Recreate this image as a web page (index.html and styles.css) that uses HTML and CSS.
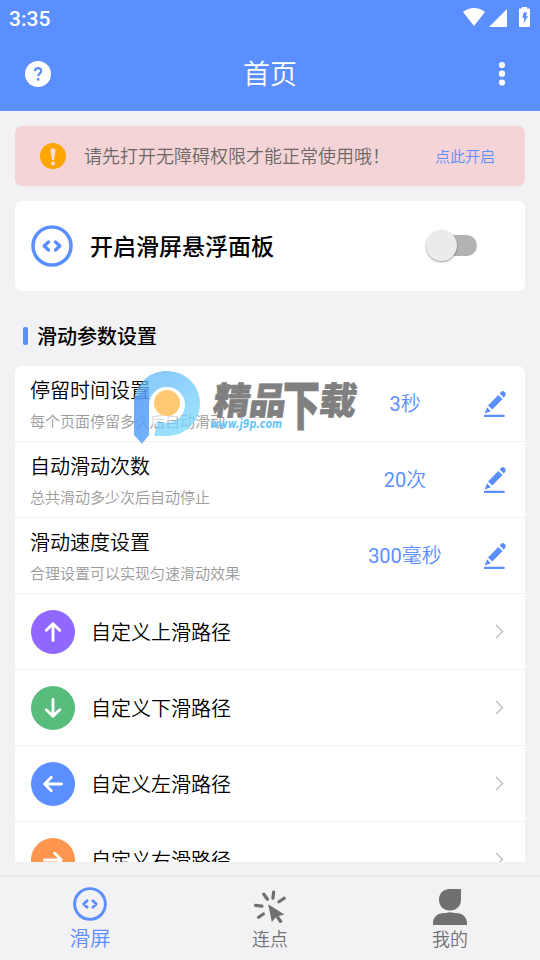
FILE: index.html
```html
<!DOCTYPE html>
<html lang="zh-CN">
<head>
<meta charset="utf-8">
<title>首页</title>
<link rel="stylesheet" href="styles.css">
</head>
<body>
<svg class="defs" width="0" height="0">
  <symbol id="slide" viewBox="0 0 42 42"><circle cx="21" cy="21" r="19" fill="none" stroke="currentColor" stroke-width="3.6"/><path d="M17.500 17L13.200 21l4.300 4M24.500 17l4.300 4-4.300 4" fill="none" stroke="currentColor" stroke-width="3.400" stroke-linecap="round" stroke-linejoin="round"/></symbol>
  <symbol id="pencil" viewBox="0 0 24 28"><path d="M6.200 17.500L16.400 7" fill="none" stroke="currentColor" stroke-width="6"/><path d="M15.600 3.400l1.600-1.700q1.800-1.400 3.600.3t.5 3.700l-1.600 1.700z M3 17.300l3.800 4-6.100 2.200z" fill="currentColor"/><path d="M.8 25.800h19" stroke="currentColor" stroke-width="2.200" stroke-linecap="round"/></symbol>
  <symbol id="arrow" viewBox="0 0 44 44"><path d="M22 30.500V13.800M15.300 20.300L22 13.700l6.700 6.600" fill="none" stroke="#fff" stroke-width="2.900" stroke-linecap="round" stroke-linejoin="round"/></symbol>
  <symbol id="chevron" viewBox="0 0 9 15"><path d="M1 1l6.500 6.500L1 14" fill="none" stroke="#c4c4c4" stroke-width="1.500"/></symbol>
</svg>
<div class="app">
  <header class="top">
    <div class="status">
      <span class="time">3:35</span>
      <svg class="signals" width="68" height="20" viewBox="0 0 68 20"><path d="M1 5C7.500-.3 16.500-.3 23 5L12 19z M27 20L45 2v18z" fill="#fff"/><path d="M57 1.500h3V0h5v1.500h2q1 0 1 1V19q0 1-1 1h-9q-1 0-1-1z" fill="#fff"/><path d="M61.500 5.500h3.800L63.900 9.300h2.200l-4.600 7.200.9-5.500h-2z" fill="#5b8fff"/></svg>
    </div>
    <div class="appbar">
      <svg class="help" width="26" height="26" viewBox="0 0 26 26"><circle cx="13" cy="13" r="13" fill="#fff"/><path d="M10 10.200C10 5.900 16.200 6.100 16.200 10c0 2.400-3 2.500-3 5.200" fill="none" stroke="#5b8fff" stroke-width="2.200"/><rect x="12" y="17" width="2.300" height="2.600" fill="#5b8fff"/></svg>
      <h1>首页</h1>
      <svg class="more" width="8" height="26" viewBox="0 0 8 26" fill="#fff"><circle cx="4" cy="4" r="3.100"/><circle cx="4" cy="12.700" r="3.100"/><circle cx="4" cy="21.500" r="3.100"/></svg>
    </div>
  </header>
  <main class="content">
    <section class="notice">
      <svg width="26" height="26" viewBox="0 0 26 26"><circle cx="13" cy="13" r="13" fill="#ffa500"/><path d="M13 5.300c1.700 0 2.700.9 2.500 2.600L14.100 17h-2.200L10.500 7.900C10.300 6.200 11.300 5.300 13 5.300z" fill="#f5dcda"/><circle cx="13" cy="20.500" r="1.900" fill="#f5dcda"/></svg>
      <p>请先打开无障碍权限才能正常使用哦！</p>
      <a>点此开启</a>
    </section>
    <section class="panel">
      <svg class="blue" width="42" height="42"><use href="#slide"/></svg>
      <h2>开启滑屏悬浮面板</h2>
      <span class="switch"><span class="knob"></span></span>
    </section>
    <h3 class="section-title">滑动参数设置</h3>
    <section class="list">
      <div class="row"><div class="label"><b>停留时间设置</b><small>每个页面停留多久后自动滑动</small></div><span class="value"><i>3</i>秒</span><svg class="edit" width="24" height="28"><use href="#pencil"/></svg></div>
      <div class="row"><div class="label"><b>自动滑动次数</b><small>总共滑动多少次后自动停止</small></div><span class="value"><i>20</i>次</span><svg class="edit" width="24" height="28"><use href="#pencil"/></svg></div>
      <div class="row"><div class="label"><b>滑动速度设置</b><small>合理设置可以实现匀速滑动效果</small></div><span class="value"><i>300</i>毫秒</span><svg class="edit" width="24" height="28"><use href="#pencil"/></svg></div>
      <div class="row path"><svg class="dir up" width="44" height="44"><use href="#arrow"/></svg><b>自定义上滑路径</b><svg class="chev" width="9" height="15"><use href="#chevron"/></svg></div>
      <div class="row path"><svg class="dir down" width="44" height="44"><use href="#arrow"/></svg><b>自定义下滑路径</b><svg class="chev" width="9" height="15"><use href="#chevron"/></svg></div>
      <div class="row path"><svg class="dir left" width="44" height="44"><use href="#arrow"/></svg><b>自定义左滑路径</b><svg class="chev" width="9" height="15"><use href="#chevron"/></svg></div>
      <div class="row path"><svg class="dir right" width="44" height="44"><use href="#arrow"/></svg><b>自定义右滑路径</b><svg class="chev" width="9" height="15"><use href="#chevron"/></svg></div>
    </section>
  </main>
  <nav class="tabs">
    <a class="tab active"><svg width="34" height="34"><use href="#slide"/></svg><span>滑屏</span></a>
    <a class="tab"><svg width="34" height="34" viewBox="0 0 34 34"><path d="M10.800 5.200l3.600 5M20.700 3l-.8 6.200M31.200 9.200l-5.200 3.600M2.600 16.300l6.300.9M5.600 28.300l4.800-3.300" stroke="#707070" stroke-width="3.200" stroke-linecap="round"/><path d="M15.200 15.200l16.200 10.200-5.800 1.500 4 5.300q-.8 2.200-3 1.700l-3.800-5.600-4 4.600z" fill="#707070"/></svg><span>连点</span></a>
    <a class="tab"><svg width="34" height="36" viewBox="0 0 34 36"><path d="M6 10.700C6 4 11 0 17 0h11v10.700C28 17 23.500 21.500 17 21.500S6 17 6 10.700z M0 36v-2c0-6 5-10 11-10 2.500 0 3.500-.8 6-.8s3.500.8 6 .8c6 0 11 4 11 10v2z" fill="#707070"/></svg><span>我的</span></a>
  </nav>
  <div class="watermark">
    <svg width="240" height="74" viewBox="0 0 240 74">
      <defs><linearGradient id="wm" x1="0" y1="0" x2=".6" y2="1"><stop offset="0" stop-color="#5fb4f8"/><stop offset=".5" stop-color="#6cc5fb"/><stop offset="1" stop-color="#7ddcff"/></linearGradient></defs>
      <path d="M15 54V32a18 18 0 1 1 11 16.500l-3 4.500z" fill="#fff" opacity=".65"/>
      <path fill-rule="evenodd" d="M0 28C5 9 17 0 33 0c18 0 33 14 33 32S52 65 33 65H20l4-15.500A18 18 0 1 0 15 33V64L8 72 0 64z" fill="url(#wm)" opacity=".75"/>
      <path d="M0 28l15-13v49l-7 9-8-9z" fill="#4a86f8" opacity=".5"/>
      <circle cx="33" cy="32" r="13" fill="#ffc973"/>
      <text class="brand" transform="translate(78 43) skewX(-8)">精品</text>
      <text class="brand" transform="translate(149 54) scale(1 1.45)">下</text>
      <text class="brand" transform="translate(184 43) skewX(-8)">载</text>
      <text class="url" x="76" y="57" textLength="72" lengthAdjust="spacingAndGlyphs">www.j9p.com</text>
    </svg>
  </div>
</div>
</body>
</html>
```
FILE: styles.css
```css
* { box-sizing: border-box; margin: 0; padding: 0; }
body { font-family: Roboto, "Noto Sans CJK SC", sans-serif; font-weight: 350; background: #f2f2f5; color: #000; }
svg { display: block; flex: none; }
.defs { position: absolute; }
.app { position: relative; width: 540px; height: 960px; display: flex; flex-direction: column; overflow: hidden; }
.top { height: 111px; background: #5b8fff; color: #fff; flex: none; }
.status { height: 37px; display: flex; justify-content: space-between; padding: 7px 10px 0 9px; }
.time { font-size: 21px; line-height: 25px; font-weight: 500; }
.appbar { height: 74px; display: flex; align-items: center; justify-content: space-between; padding: 0 34px 0 25px; }
h1 { font-size: 27px; line-height: 40px; font-weight: 350; margin: 1px 9px 0 0; }
.content { flex: none; height: 751px; padding: 15px 15px 0; overflow: hidden; }
.notice { height: 60px; border-radius: 7px; background: #f4d4d7; display: flex; align-items: center; padding: 0 30px 0 25px; }
.notice p { font-size: 18px; line-height: 28px; color: #6b6868; margin: 2px 0 0 18px; flex: 1; white-space: nowrap; }
.notice a { font-size: 15px; line-height: 22px; color: #5b8fff; margin-top: 1px; }
.panel { height: 90px; margin-top: 15px; border-radius: 7px; background: #fff; display: flex; align-items: center; padding: 0 48px 0 16px; }
.blue { color: #5b8fff; margin-bottom: 1px; }
.panel h2 { font-size: 23px; line-height: 34px; font-weight: 500; margin: 3px 0 0 17px; flex: 1; }
.switch { width: 46px; height: 21px; border-radius: 11px; background: #b2b2b2; display: flex; align-items: center; margin-bottom: 1px; }
.knob { width: 31px; height: 31px; flex: none; margin-left: -5px; border-radius: 50%; background: #ebebeb; box-shadow: 0 1px 2px rgba(0,0,0,.4); }
.section-title { height: 75px; padding: 16px 0 0 8px; display: flex; align-items: center; gap: 9px; font-size: 20px; line-height: 30px; font-weight: 500; }
.section-title::before { content: ""; width: 5px; height: 18px; border-radius: 2px; background: #5b8fff; margin-bottom: 1px; }
.list { background: #fff; border-radius: 7px 7px 0 0; }
.row { height: 76px; border-bottom: 1px solid #f0f0f2; display: flex; align-items: center; padding: 0 16px 0 15px; }
.row b { font-size: 20px; line-height: 30px; font-weight: 350; }
.label { display: flex; flex-direction: column; width: 315px; gap: 5px; margin-top: 2px; }
.label small { font-size: 15px; line-height: 22px; color: #9b9b9b; }
.value { width: 120px; text-align: center; font-size: 20px; line-height: 30px; color: #5b8fff; }
.value i { font-style: normal; font-weight: 400; }
.edit { margin-left: 19px; color: #5b8fff; }
.path { padding: 0 21px 0 16px; }
.path b { margin: 2px 0 0 16px; flex: 1; }
.dir { border-radius: 50%; }
.up { background: #9068ff; }
.down { background: #57bc7c; transform: rotate(180deg); }
.left { background: #5b8fff; transform: rotate(-90deg); }
.right { background: #ff9650; transform: rotate(90deg); }
.tabs { height: 85px; margin-top: 13px; border-top: 2px solid #e9e9eb; display: flex; flex: none; }
.tab { width: 180px; display: flex; flex-direction: column; align-items: center; color: #707070; font-size: 18px; line-height: 28px; padding-top: 12px; }
.tab span { margin-top: 3px; }
.tab:nth-child(3) span { margin-top: 1px; }
.tab.active { color: #5b8fff; font-size: 20.500px; padding-top: 10px; }
.tab.active span { margin-top: 4px; }
.watermark { position: absolute; left: 134px; top: 371px; }
.brand { font: 900 37px "Noto Sans CJK SC", sans-serif; fill: #808080; stroke: #808080; stroke-width: .6px; letter-spacing: -1px; }
.url { font: italic 600 12px "DejaVu Sans", sans-serif; fill: #67c3ff; }
```
